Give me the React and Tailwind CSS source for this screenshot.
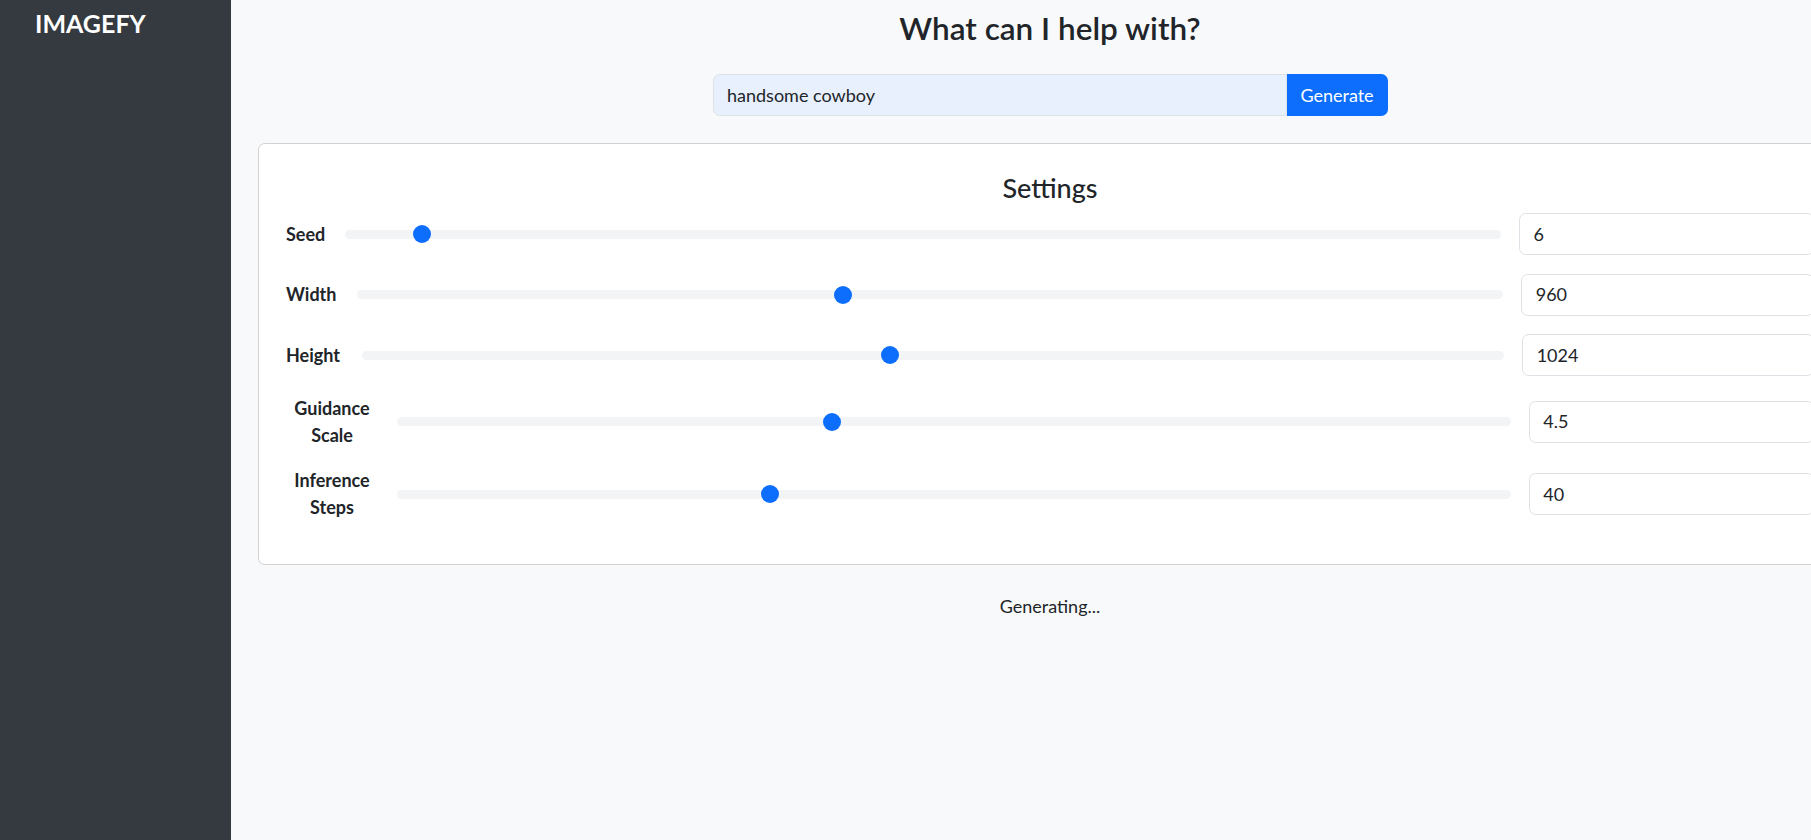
import React from "react";

const rows = [
  { label: ["Seed"], lw: "w-[40px]", value: "6", p: 0.06 },
  { label: ["Width"], lw: "w-[52px]", value: "960", p: 0.423 },
  { label: ["Height"], lw: "w-[57px]", value: "1024", p: 0.462 },
  { label: ["Guidance", "Scale"], lw: "w-[92px] text-center", value: "4.5", p: 0.389 },
  { label: ["Inference", "Steps"], lw: "w-[92px] text-center", value: "40", p: 0.332 },
];

function Row({ row }) {
  return (
    <div className="flex items-center">
      <div className={`${row.lw} shrink-0 whitespace-nowrap text-[18px] font-bold leading-[27px] text-[#212529]`}>
        {row.label.map((l) => (
          <div key={l}>{l}</div>
        ))}
      </div>
      <div className="relative ml-[19px] h-[9px] flex-[4.345_1_0%] rounded-full bg-[#f3f4f6]">
        <span
          className="absolute top-1/2 h-[18px] w-[18px] -translate-y-1/2 rounded-full bg-[#0d6efd]"
          style={{ left: `calc((100% - 18px) * ${row.p})` }}
        />
      </div>
      <div className="ml-[18px] flex h-[42px] flex-[1_1_0%] items-center rounded-[6.75px] border border-[#dee2e6] bg-white px-[13.5px] text-[18px] text-[#212529]">
        {row.value}
      </div>
    </div>
  );
}

export default function App() {
  return (
    <div className="flex h-[840px] w-[1811px] overflow-hidden bg-[#f8f9fa] font-['Lato','Noto_Sans',sans-serif] text-[#212529]">
      <aside className="w-[231px] shrink-0 bg-[#343a40] pl-[35px] pt-[5px]">
        <div className="text-[25px] font-bold leading-[36px] text-white">IMAGEFY</div>
      </aside>
      <main className="flex w-[1638px] shrink-0 flex-col items-center">
        <h3 className="mt-[10px] text-[31.5px] font-semibold leading-[36px] text-[#212529]">
          What can I help with?
        </h3>
        <div className="mt-[28px] flex h-[42px] w-[675px]">
          <div className="flex flex-1 items-center rounded-l-[6.75px] border border-[#dee2e6] bg-[#e8f0fe] px-[13.5px] text-[18px] text-[#212529]">
            handsome cowboy
          </div>
          <button className="flex w-[101px] items-center justify-center rounded-r-[6.75px] bg-[#0d6efd] text-[18px] text-white">
            Generate
          </button>
        </div>
        <section className="mt-[27px] w-[1584px] rounded-[6.75px] border border-[#d2d2d2] bg-white px-[27px] pb-[43px] pt-[26px]">
          <h4 className="mb-[7px] text-center text-[27px] font-medium leading-[36px] text-[#212529]">Settings</h4>
          <div className="flex flex-col gap-[18.5px]">
            {rows.map((r) => (
              <Row key={r.value} row={r} />
            ))}
          </div>
        </section>
        <div className="mt-[28px] text-[18px] leading-[27px] text-[#212529]">Generating...</div>
      </main>
    </div>
  );
}
